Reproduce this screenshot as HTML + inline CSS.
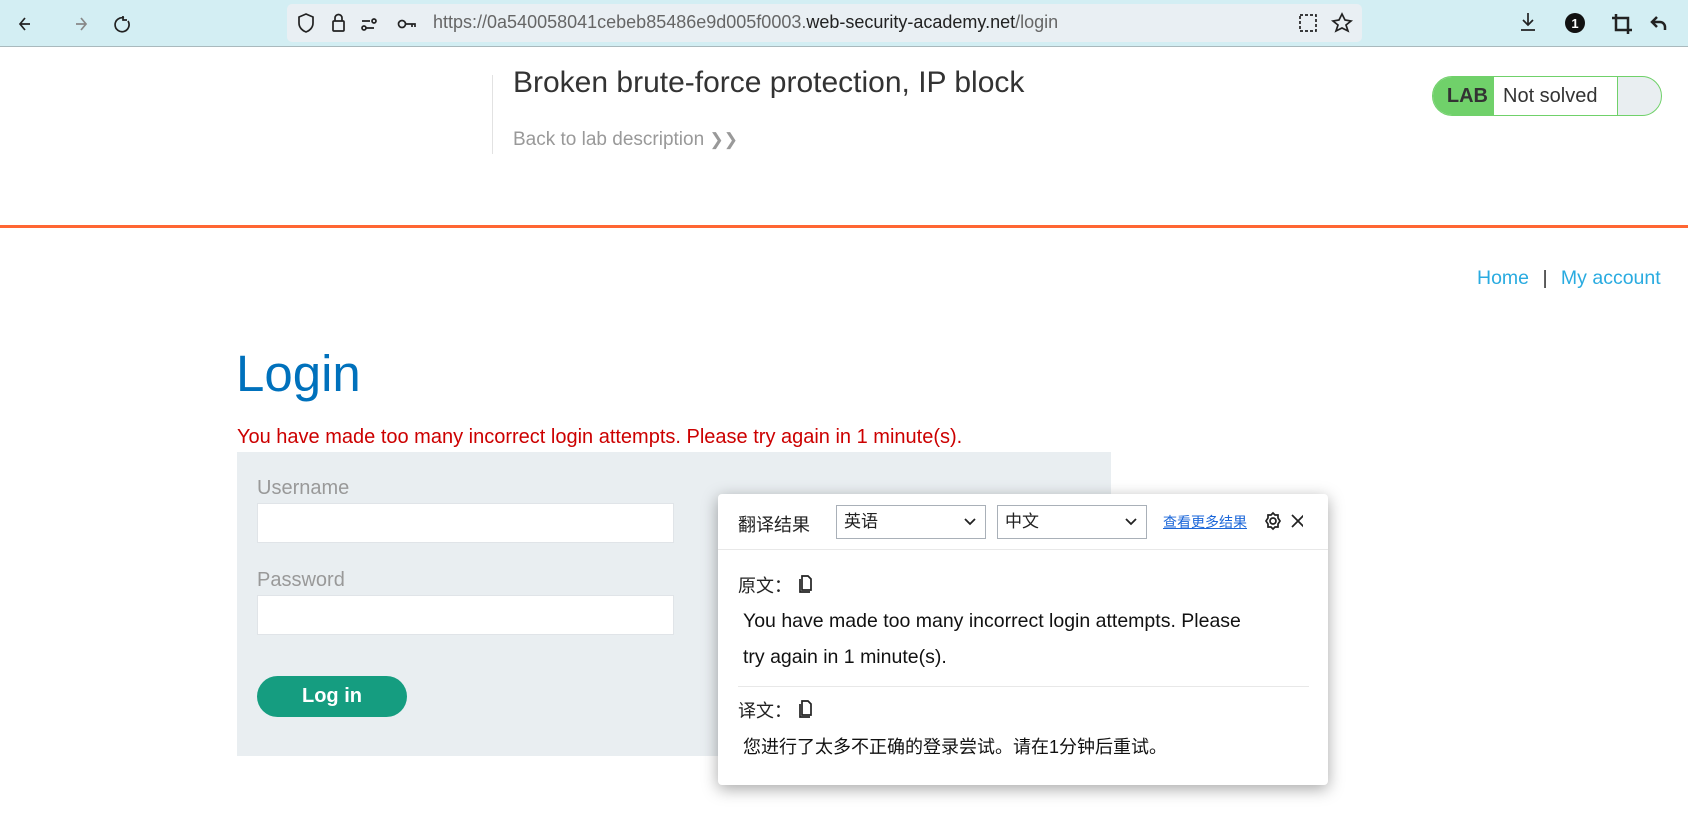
<!DOCTYPE html>
<html><head><meta charset="utf-8"><style>
*{box-sizing:border-box;margin:0;padding:0}
body{width:1688px;height:826px;overflow:hidden;background:#fff;font-family:"Liberation Sans","Noto Sans CJK SC",sans-serif;position:relative}
.a{position:absolute}
.bar{left:0;top:0;width:1688px;height:47px;background:#d3eef3;border-bottom:1px solid #a9b9bd}
.url{left:287px;top:4px;width:1075px;height:38px;background:#e9eff3;border-radius:5px}
.ic{stroke:#222;fill:none;stroke-width:1.7}
input{border:1px solid #e0e4e8;background:#fff}
.chev{position:absolute;right:9px;top:12px}
</style></head><body>
<div class="a bar"></div>
<svg class="a" style="left:18px;top:13px" width="150" height="22"><g class="ic"><path d="M12 11H2M7 5L2 11l5 6"/><path d="M58 11h10M63 5l5 6-5 6" stroke="#888"/><path d="M106 5a7 7 0 1 0 4 3M105 3v4h4"/></g></svg>
<div class="a url"></div>
<svg class="a" style="left:296px;top:12px" width="130" height="24"><g class="ic"><path d="M10 2l7 3v6c0 5-4 8-7 9-3-1-7-4-7-9V5z"/><rect x="37" y="9" width="11" height="10" rx="1"/><path d="M39 9V6a3.5 3.5 0 0 1 7 0v3"/><path d="M66 9h8M70 16h8"/><circle cx="78" cy="9" r="2"/><circle cx="68" cy="16" r="2"/><circle cx="106" cy="12" r="3.5"/><path d="M110 12h9v3M116 12v3"/></g></svg>
<div class="a" style="left:433px;top:12px;font-size:18px;color:#666">https://0a540058041cebeb85486e9d005f0003.<span style="color:#222">web-security-academy.net</span>/login</div>
<svg class="a" style="left:1298px;top:12px" width="60" height="24"><g class="ic"><rect x="2" y="3" width="16" height="16" stroke-dasharray="3 2"/><path d="M44 2l3 6 6 1-5 4 2 6-6-3-6 3 2-6-5-4 6-1z"/></g></svg>
<svg class="a" style="left:1518px;top:10px" width="160" height="26"><g class="ic"><path d="M10 3v12M5 10l5 5 5-5M3 20h14"/><path d="M98 4v16h16M94 8h16v16" stroke-width="2.5"/><path d="M134 12h8a5 5 0 0 1 5 5v3M139 7l-5 5 5 5" stroke-width="2.5"/></g><circle cx="57" cy="13" r="10" fill="#111"/><text x="57" y="18" font-size="13" fill="#fff" text-anchor="middle" font-weight="bold" font-family="Liberation Sans">1</text></svg>

<div class="a" style="left:492px;top:75px;width:1px;height:79px;background:#e2e2e2"></div>
<div class="a" style="left:513px;top:66px;font-size:30px;color:#333">Broken brute-force protection, IP block</div>
<div class="a" style="left:513px;top:129px;font-size:19px;color:#999">Back to lab description <span style="font-size:17px">&#x276F;&#x276F;</span></div>

<div class="a" style="left:1432px;top:76px;width:230px;height:40px;border:1px solid #70d16a;border-radius:20px;background:#e9eef1;overflow:hidden">
<div class="a" style="left:0;top:0;width:61px;height:38px;background:#70d16a;font-weight:bold;font-size:20px;color:#333;line-height:38px;text-align:right;padding-right:6px">LAB</div>
<div class="a" style="left:61px;top:0;width:124px;height:38px;background:#fff;border-right:1px solid #70d16a;font-size:20px;color:#333;line-height:38px;padding-left:9px">Not solved</div>
</div>

<div class="a" style="left:0;top:225px;width:1688px;height:3px;background:#ff6633"></div>
<div class="a" style="left:1477px;top:267px;font-size:19.5px;color:#29abe0">Home <span style="color:#333;margin:0 8px">|</span> My account</div>

<div class="a" style="left:236px;top:344px;font-size:51px;color:#0071bc">Login</div>
<div class="a" style="left:237px;top:426px;font-size:20px;color:#c00">You have made too many incorrect login attempts. Please try again in 1 minute(s).</div>
<div class="a" style="left:237px;top:452px;width:874px;height:304px;background:#e9eef1"></div>
<div class="a" style="left:257px;top:477px;font-size:20px;color:#999">Username</div>
<input class="a" style="left:257px;top:503px;width:417px;height:40px">
<div class="a" style="left:257px;top:569px;font-size:20px;color:#999">Password</div>
<input class="a" style="left:257px;top:595px;width:417px;height:40px">
<div class="a" style="left:257px;top:676px;width:150px;height:41px;border-radius:21px;background:#159d80;color:#fff;font-weight:bold;font-size:20px;text-align:center;line-height:41px">Log in</div>

<div class="a" style="left:718px;top:494px;width:610px;height:291px;background:#fff;border-radius:4px;box-shadow:0 4px 16px rgba(0,0,0,.35)">
<div class="a" style="left:20px;top:17px;font-size:18px;color:#222">翻译结果</div>
<div class="a" style="left:118px;top:11px;width:150px;height:34px;border:1px solid #a9b0b8;font-size:17px;color:#222;padding:5px 7px;line-height:22px">英语<svg class="chev" width="12" height="9"><path d="M1 1l5 5 5-5" stroke="#222" stroke-width="1.8" fill="none"/></svg></div>
<div class="a" style="left:279px;top:11px;width:150px;height:34px;border:1px solid #a9b0b8;font-size:17px;color:#222;padding:5px 7px;line-height:22px">中文<svg class="chev" width="12" height="9"><path d="M1 1l5 5 5-5" stroke="#222" stroke-width="1.8" fill="none"/></svg></div>
<div class="a" style="left:445px;top:18px;font-size:14px;color:#1a66d9;text-decoration:underline">查看更多结果</div>
<svg class="a" style="left:545px;top:17px" width="40" height="22"><g class="ic" stroke-width="1.5"><circle cx="10" cy="10" r="3"/><path d="M10 2l2 2h3v3l2 3-2 3v3h-3l-2 2-2-2H5v-3l-2-3 2-3V4h3z"/><path d="M29 4l12 12M41 4L29 16"/></g></svg>
<div class="a" style="left:0;top:55px;width:610px;height:1px;background:#e8e8e8"></div>
<div class="a" style="left:20px;top:78px;font-size:18px;color:#222">原文：</div>
<svg class="a" style="left:79px;top:80px" width="16" height="20"><g class="ic" stroke-width="1.3"><path d="M3 5v13h10M5 2h6l3 3v11H5z"/></g></svg>
<div class="a" style="left:25px;top:109px;width:510px;font-size:19.5px;line-height:36px;color:#111">You have made too many incorrect login attempts. Please try again in 1 minute(s).</div>
<div class="a" style="left:20px;top:192px;width:571px;height:1px;background:#e8e8e8"></div>
<div class="a" style="left:20px;top:203px;font-size:18px;color:#222">译文：</div>
<svg class="a" style="left:79px;top:205px" width="16" height="20"><g class="ic" stroke-width="1.3"><path d="M3 5v13h10M5 2h6l3 3v11H5z"/></g></svg>
<div class="a" style="left:25px;top:239px;font-size:18px;color:#111">您进行了太多不正确的登录尝试。请在1分钟后重试。</div>
</div>
</body></html>
